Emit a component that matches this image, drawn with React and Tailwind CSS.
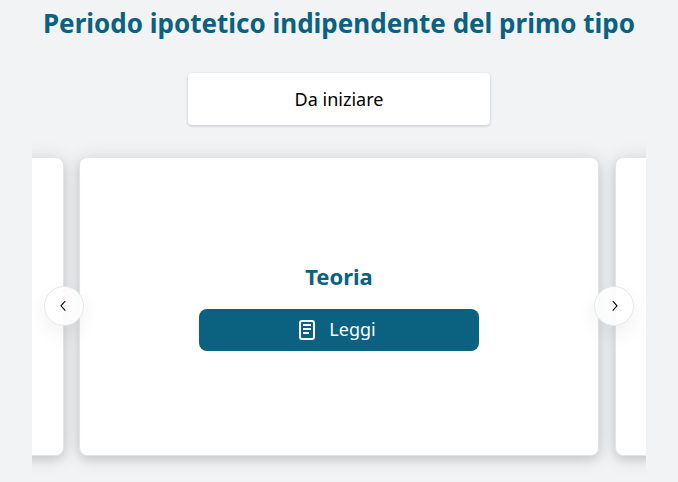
import React from "react";

const cardClass =
  "h-[299px] w-[520px] shrink-0 rounded-lg border border-[#e2e4e6] bg-white shadow-[0_4px_8px_rgba(0,0,0,0.1),0_2px_20px_rgba(0,0,0,0.12)]";

const arrowClass =
  "absolute top-[145px] flex h-10 w-10 items-center justify-center rounded-full border border-[#e2e8f0] bg-white/90 text-black shadow-[0_8px_20px_rgba(0,0,0,0.06)]";

function ReadIcon() {
  return (
    <svg width="24" height="24" viewBox="0 0 24 24" fill="none" stroke="currentColor" strokeWidth="2">
      <rect x="5" y="3" width="14" height="18" rx="2" />
      <path d="M8 7h8M8 11h8M8 15h6" />
    </svg>
  );
}

export default function App() {
  return (
    <main className="flex h-[482px] w-full flex-col items-center overflow-hidden bg-[#f1f3f5] font-['Noto_Sans',sans-serif]">
      <h1 className="mt-1 whitespace-nowrap text-[26px] leading-[38px] font-bold text-[#0a6180]">
        Periodo ipotetico indipendente del primo tipo
      </h1>

      <div className="mt-[31px] flex h-[52px] w-[302px] shrink-0 items-center justify-center rounded bg-white text-lg text-black shadow-[0_1px_3px_rgba(0,0,0,0.2)]">
        Da iniziare
      </div>

      <section className="relative mt-4 h-[341px] w-[614px] shrink-0">
        <div className="flex h-[341px] justify-center gap-4 overflow-hidden pt-4">
          <div className={cardClass + " translate-x-px"} />
          <article className={cardClass + " flex flex-col items-center"}>
            <h2 className="mt-[102px] text-[22px] leading-8 font-bold text-[#0a6180]">Teoria</h2>
            <button className="mt-[17px] flex h-[42px] w-[280px] items-center justify-center gap-[10px] rounded-lg bg-[#0a6180] pr-[7px] text-lg text-white">
              <ReadIcon />
              <span className="pb-0.5">Leggi</span>
            </button>
          </article>
          <div className={cardClass} />
        </div>

        <button className={arrowClass + " left-3"} aria-label="Precedente">
          <svg width="12" height="12" viewBox="0 0 12 12" fill="none" stroke="currentColor" strokeWidth="1.1">
            <path d="M7.3 1 3 5.8l4.3 4.8" />
          </svg>
        </button>
        <button className={arrowClass + " right-3"} aria-label="Successivo">
          <svg width="12" height="12" viewBox="0 0 12 12" fill="none" stroke="currentColor" strokeWidth="1.1">
            <path d="m4.7 1 4.3 4.8-4.3 4.8" />
          </svg>
        </button>
      </section>
    </main>
  );
}
